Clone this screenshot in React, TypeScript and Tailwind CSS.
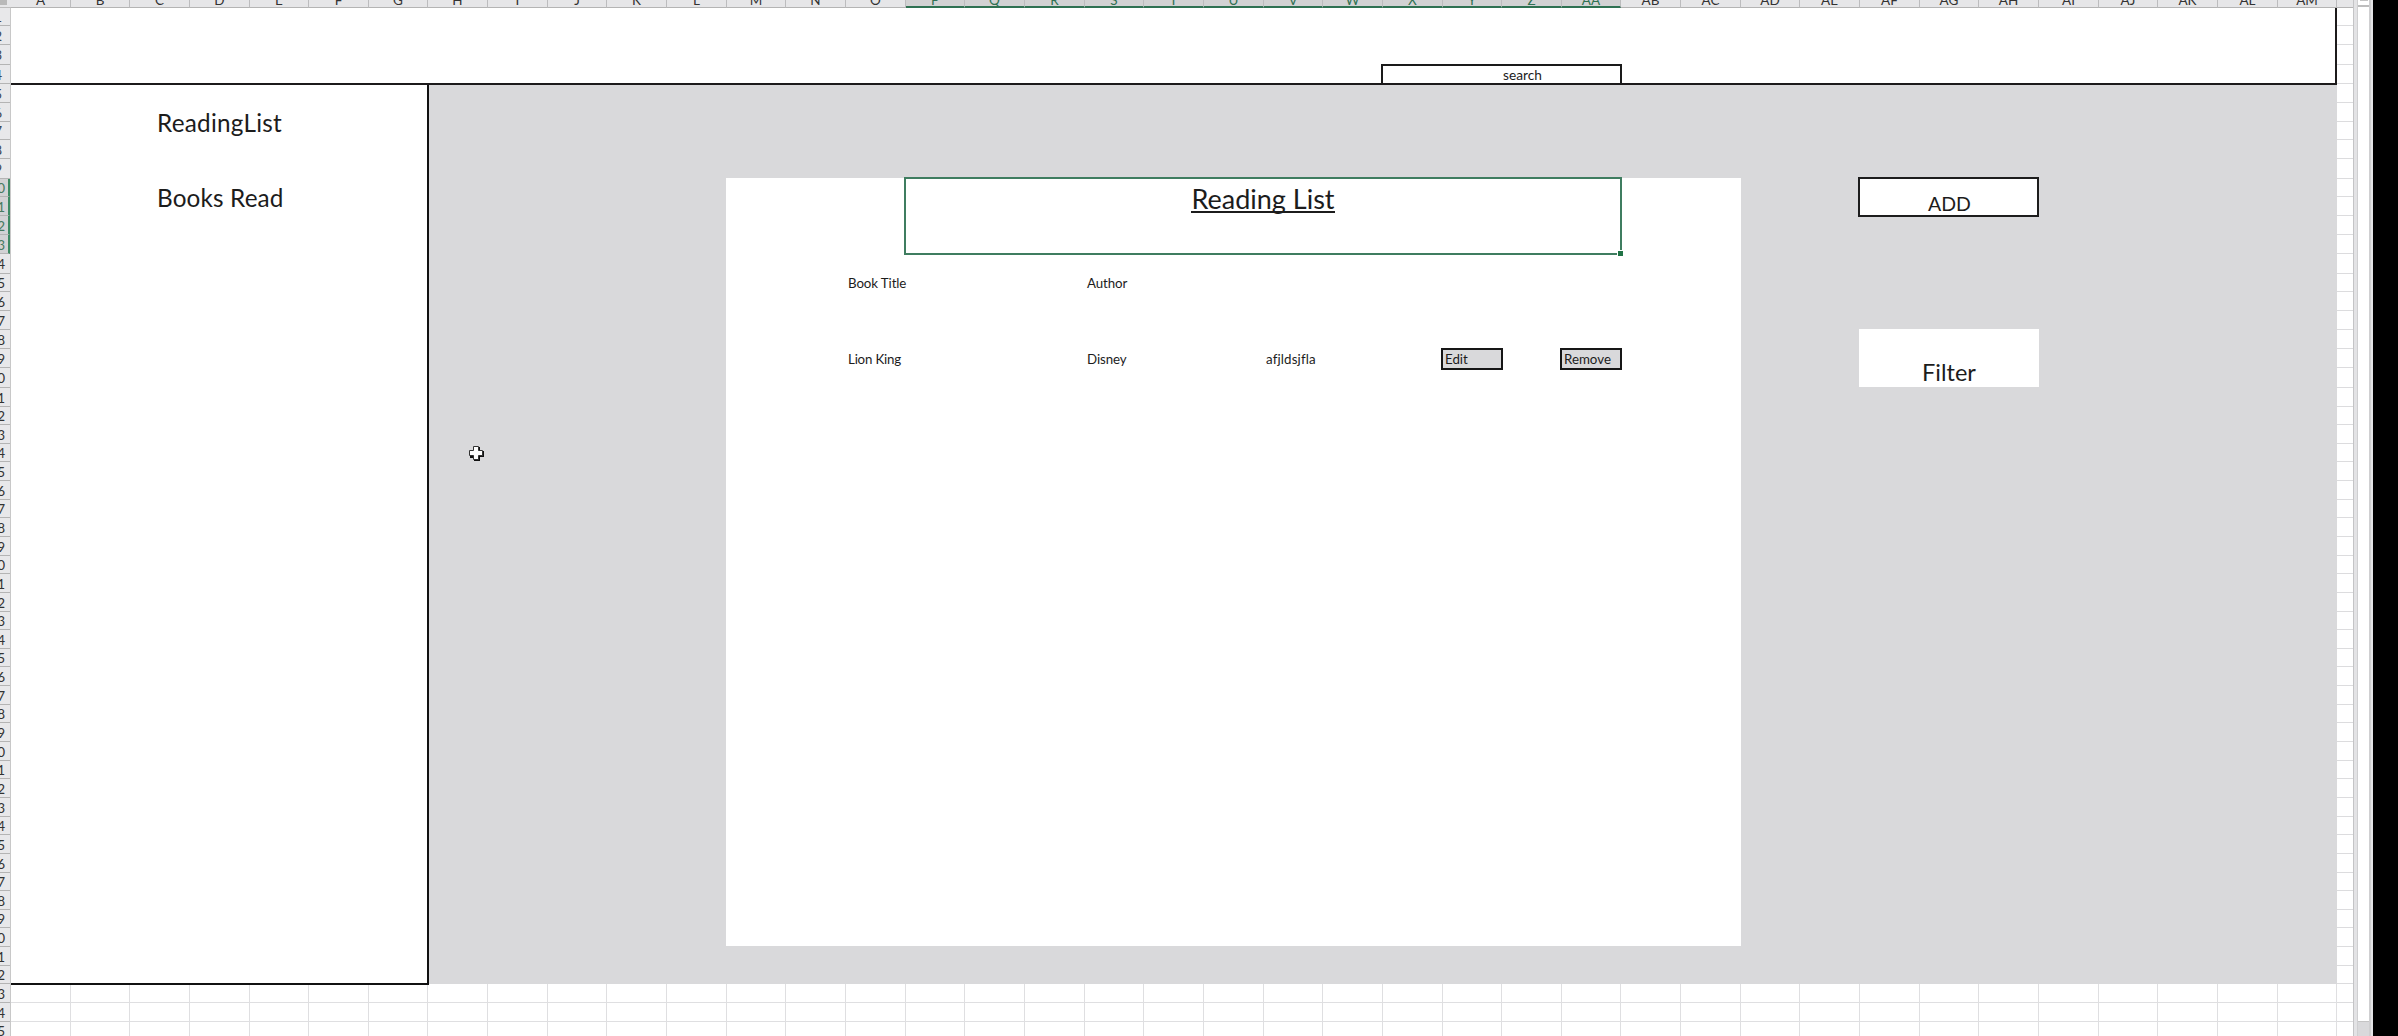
import type { ReactNode } from "react";

const ROW_BOTTOMS = [
  26.3, 45, 64.5, 84.3, 103, 121.7, 140.3, 159, 178.5, 197, 216, 235, 254, 273.5, 292.3, 311, 330, 349.3, 368.3, 387.7,
  ...Array.from({ length: 34 }, (_, i) => 406.5 + i * 18.64),
  1040,
].map(Math.round);
const ROWS = ROW_BOTTOMS.map((b, i) => b - (i ? ROW_BOTTOMS[i - 1] : 8));
const ROW_TRACKS = ROWS.map((h) => h + "px").join(" ");
const EDGES = Array.from({ length: 40 }, (_, i) => Math.round(10.9 + i * 59.65));
const COLS = EDGES.slice(1).map((e, i) => e - EDGES[i]);
const COL_TRACKS = COLS.map((w) => w + "px").join(" ") + " 16px";

const colName = (i: number) => (i < 26 ? String.fromCharCode(65 + i) : "A" + String.fromCharCode(65 + i - 26));

function Area({ c, r, className = "", children }: { c: [number, number]; r: [number, number]; className?: string; children?: ReactNode }) {
  return (
    <div
      className={"relative whitespace-nowrap " + className}
      style={{ gridColumn: `${c[0]} / ${c[1]}`, gridRow: `${r[0]} / ${r[1]}` }}
    >
      {children}
    </div>
  );
}

function Label({ col, row, className = "", children }: { col: number; row: number; className?: string; children: ReactNode }) {
  return (
    <Area c={[col, col + 2]} r={[row, row + 1]} className={"flex items-center pt-[2px] pl-[2px] text-[13.3px] " + className}>
      {children}
    </Area>
  );
}

function ColumnHeaders() {
  return (
    <div className="flex h-2 shrink-0 overflow-hidden bg-[#e6e6e8]">
      <div className="flex w-[11px] shrink-0 border-b border-[#bdbdbd]">
        <div className="h-[5px] w-[7px] bg-[#b9b9b9]" />
      </div>
      {COLS.map((w, i) => {
        const active = i >= 15 && i <= 26;
        return (
          <div
            key={i}
            style={{ width: w }}
            className={
              "flex h-2 shrink-0 items-end justify-center overflow-hidden border-r border-r-[#bcbcbe] text-[13.5px] leading-4 " +
              (active ? "border-b-2 border-b-[#2f7152] bg-[#d2d2d3] text-[#2f7152]" : "border-b border-b-[#b4b4b4] text-[#333]")
            }
          >
            <span className={active ? "-mb-[2px]" : "-mb-px"}>{colName(i)}</span>
          </div>
        );
      })}
      <div className="w-4 shrink-0 border-b border-[#b4b4b4]" />
    </div>
  );
}

function RowHeaders() {
  return (
    <div className="w-[11px] shrink-0 overflow-hidden border-r border-[#c8c8c8] bg-[#e8e8ea]">
      {ROWS.map((h, i) => {
        const active = i >= 9 && i <= 12;
        return (
          <div
            key={i}
            style={{ height: h }}
            className={
              "flex items-center justify-end overflow-hidden border-b border-b-[#b4b4b4] text-[13.5px] leading-none " +
              (active
                ? "border-r-2 border-r-[#3c8a63] bg-[#d2d2d4] pr-[3px] text-[#477a5f]"
                : i < 9
                  ? "pr-2 text-[#3b4654]"
                  : "pr-[5px] text-[#333]")
            }
          >
            <span className="pt-[3px]">{i + 1}</span>
          </div>
        );
      })}
    </div>
  );
}

function GridLines() {
  return (
    <>
      {[53, 54, 55].map((r) =>
        COLS.map((_, i) => <Area key={r + "-" + i} c={[i + 1, i + 2]} r={[r, r + 1]} className="border-r border-b border-[#dfdfe1]" />),
      )}
      {ROWS.map((_, i) => (
        <Area key={i} c={[40, 41]} r={[i + 1, i + 2]} className="border-b border-[#dcdcde]" />
      ))}
    </>
  );
}

function Sheet() {
  return (
    <div className="grid shrink-0 bg-white" style={{ gridTemplateColumns: COL_TRACKS, gridTemplateRows: ROW_TRACKS }}>
      <GridLines />
      <Area c={[8, 40]} r={[5, 53]} className="bg-[#d9d9db]" />
      <Area c={[13, 30]} r={[10, 51]} className="-mt-px mb-px -ml-px bg-white" />

      <Area c={[1, 40]} r={[1, 5]} className="z-10 -mb-px border-r-2 border-b-2 border-[#1c1a1b]" />
      <Area c={[24, 28]} r={[4, 5]} className="-mt-px -mr-px -ml-[2px] flex items-center justify-center border-2 border-b-0 border-[#1a1a1a] pl-[42px] text-[13.7px]">
        search
      </Area>

      <Area c={[1, 8]} r={[5, 53]} className="-mr-px -mb-px border-r-2 border-b-2 border-[#111] bg-white" />
      <Area c={[3, 7]} r={[6, 8]} className="flex items-center pt-[3px] pl-[27px] text-[24.3px] leading-none tracking-[0.25px]">
        ReadingList
      </Area>
      <Area c={[3, 7]} r={[10, 12]} className="flex items-center pt-px pl-[27px] text-[24.3px] leading-none tracking-[0.15px]">
        Books Read
      </Area>

      <Area c={[16, 28]} r={[10, 14]} className="-mt-[2px] -mr-px -mb-px -ml-[2px] flex justify-center border-2 border-[#3f7d60] pt-1">
        <span className="h-[30px] border-b-2 border-[#1c1c1c] text-[27px] leading-[31px]">Reading List</span>
        <span className="absolute -right-[3px] -bottom-[3px] size-[6px] border-t border-l border-white bg-[#217346]" />
      </Area>

      <Label col={15} row={15} className="tracking-[-0.1px]">Book Title</Label>
      <Label col={19} row={15} className="tracking-[-0.1px]">Author</Label>
      <Label col={15} row={19} className="tracking-[-0.2px]">Lion King</Label>
      <Label col={19} row={19} className="tracking-[-0.1px]">Disney</Label>
      <Label col={22} row={19} className="tracking-[0.15px]">afjldsjfla</Label>
      <Area c={[25, 26]} r={[19, 20]} className="-mt-px -mr-px -mb-[2px] -ml-[2px] flex items-center border-2 border-[#161616] bg-[#d9d9db] pt-px pl-[2px] text-[13.3px]">
        Edit
      </Area>
      <Area c={[27, 28]} r={[19, 20]} className="-mt-px -mr-px -mb-[2px] -ml-[2px] flex items-center border-2 border-[#161616] bg-[#d9d9db] pt-px pl-[2px] text-[13.3px]">
        Remove
      </Area>

      <Area c={[32, 35]} r={[10, 12]} className="-mt-[2px] -mb-px -ml-[2px] flex items-end justify-center border-2 border-[#1d1d1d] bg-white pb-0.5 pl-0.5 text-[19.5px] leading-none">
        ADD
      </Area>
      <Area c={[32, 35]} r={[18, 21]} className="-mt-px mb-px -ml-px flex items-end justify-center bg-white pb-[3px] text-[23.5px] leading-none">
        Filter
      </Area>

      <Area c={[8, 9]} r={[24, 25]} className="flex items-center justify-center pl-9">
        <svg viewBox="0 0 16 16" className="h-4 w-4 shrink-0">
          <path d="M6 2h6v4h4v6h-4v4H6v-3H2V6h4z" fill="#111" />
          <path d="M5.5 1.5h5v4h4v5h-4v4h-5v-4h-4v-5h4z" fill="#fff" stroke="#333" />
        </svg>
      </Area>
    </div>
  );
}

export default function App() {
  return (
    <div className="flex h-[1036px] w-[2398px] overflow-hidden bg-black font-['Lato','Liberation_Sans',sans-serif] text-[#1c1c1c] [font-variant-ligatures:none]">
      <div className="flex w-[2353px] shrink-0 flex-col overflow-hidden">
        <ColumnHeaders />
        <div className="flex shrink-0">
          <RowHeaders />
          <Sheet />
        </div>
      </div>
      <div className="flex w-5 shrink-0 border-l border-[#c4c4c6] bg-[#e3e3e5] pl-[3px]">
        <div className="flex w-[14px] flex-col border-x border-r-2 border-[#cfcfd1] bg-white">
          <div className="flex h-[7px] shrink-0 justify-center border-b-2 border-[#bdbdbd]">
            <div className="h-px w-2 bg-[#c4c4c4]" />
          </div>
          <div className="h-[1014px] shrink-0" />
          <div className="grow border-t border-[#c4c4c4] bg-[#d9d9db]" />
        </div>
      </div>
    </div>
  );
}
